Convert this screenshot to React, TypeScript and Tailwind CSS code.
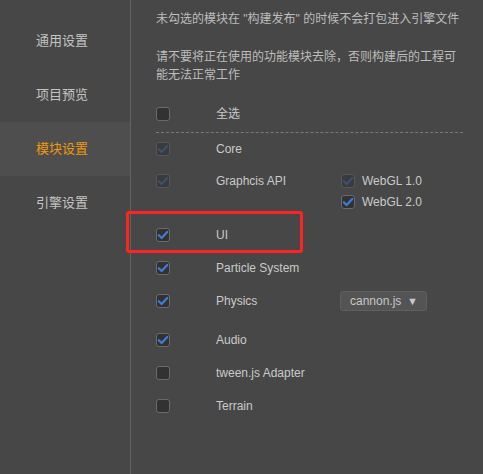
import React from "react";

function Check({ checked, disabled }: { checked?: boolean; disabled?: boolean }) {
  return (
    <div
      className={
        "w-[14px] h-[14px] rounded-[3px] border flex items-center justify-center shrink-0 " +
        (disabled ? "border-[#575757] bg-[#3a3a3a]" : "border-[#6a6a6a] bg-[#323232]")
      }
    >
      {checked && (
        <svg width="12" height="12" viewBox="0 0 12 12">
          <path
            d="M1.8 6.2 L4.6 9 L10.3 3"
            fill="none"
            stroke={disabled ? "#3b5173" : "#3d7ddb"}
            strokeWidth="2.2"
            strokeLinecap="round"
            strokeLinejoin="round"
          />
        </svg>
      )}
    </div>
  );
}

function Row({
  label,
  checked,
  disabled,
  extra,
  className = "",
  children,
}: {
  label: string;
  checked?: boolean;
  disabled?: boolean;
  extra?: React.ReactNode;
  className?: string;
  children?: React.ReactNode;
}) {
  return (
    <div className={"relative flex items-center h-[28px] " + className}>
      <div className="w-[60px] flex">
        <Check checked={checked} disabled={disabled} />
      </div>
      <div className="w-[124px] text-[#cacaca]">{label}</div>
      {extra}
      {children}
    </div>
  );
}

export default function App() {
  const nav = ["通用设置", "项目预览", "模块设置", "引擎设置"];
  return (
    <div
      className="w-[483px] h-[474px] bg-[#474747] flex text-[12px] overflow-hidden"
      style={{ fontFamily: '"Liberation Sans", "Noto Sans CJK SC", sans-serif' }}
    >
      <div className="w-[131px] shrink-0 border-r border-[#626262] pt-[14px]">
        {nav.map((n, i) => (
          <div
            key={n}
            className={
              "h-[54px] flex items-center pl-[36px] text-[13px] " +
              (i === 2 ? "bg-[#4e4e4e] text-[#f0980c]" : "text-[#c4c4c4]")
            }
          >
            {n}
          </div>
        ))}
      </div>
      <div className="flex-1 pl-[25px] pt-[10px]">
        <div className="leading-[18px] text-[#bdbdbd] w-[308px]">
          <p>未勾选的模块在 "构建发布" 的时候不会打包进入引擎文件</p>
          <p className="mt-[20px]">请不要将正在使用的功能模块去除，否则构建后的工程可能无法正常工作</p>
        </div>
        <Row label="全选" className="mt-[16px]" />
        <div className="mt-[4px] w-[307px] border-t border-dashed border-[#7a7a7a]" />
        <Row label="Core" checked disabled className="mt-[2px]" />
        <div className="mt-[7px] flex">
          <div className="w-[60px] h-[21px] flex items-center">
            <Check checked disabled />
          </div>
          <div className="w-[125px] h-[21px] flex items-center text-[#cacaca]">Graphcis API</div>
          <div className="flex flex-col">
            <div className="h-[21px] flex items-center gap-[7px] text-[#cacaca]">
              <Check checked disabled />
              WebGL 1.0
            </div>
            <div className="h-[21px] flex items-center gap-[7px] text-[#cacaca]">
              <Check checked />
              WebGL 2.0
            </div>
          </div>
        </div>
        <Row label="UI" checked className="mt-[9px]">
          <div className="absolute left-[-30px] top-[-10px] w-[177px] h-[42px] border-[3px] border-[#ff2424] rounded-[3px]" />
        </Row>
        <Row label="Particle System" checked className="mt-[5px]" />
        <Row
          label="Physics"
          checked
          className="mt-[5px]"
          extra={
            <div className="w-[87px] h-[20px] rounded-[3px] bg-[#545454] border border-[#5f5f5f] flex items-center justify-between pl-[9px] pr-[8px] text-[#c8c8c8]">
              <span>cannon.js</span>
              <span className="text-[11px] leading-none">▼</span>
            </div>
          }
        />
        <Row label="Audio" checked className="mt-[11px]" />
        <Row label="tween.js Adapter" className="mt-[5px]" />
        <Row label="Terrain" className="mt-[5px]" />
      </div>
    </div>
  );
}
